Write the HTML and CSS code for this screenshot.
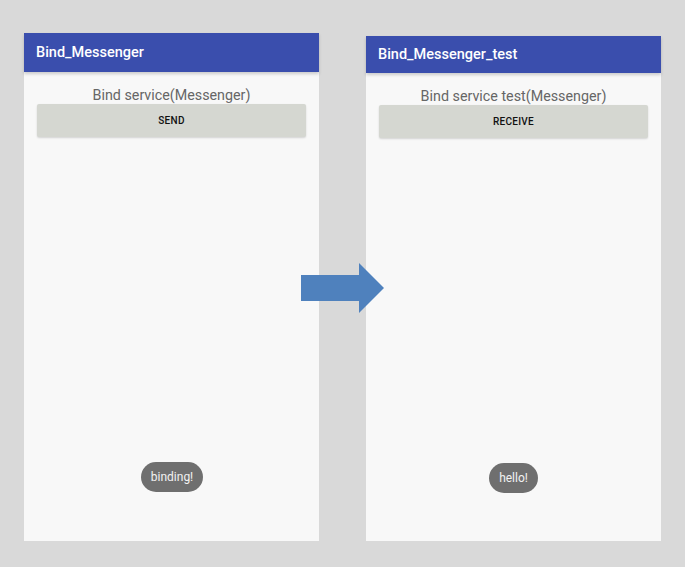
FILE: index.html
```html
<!DOCTYPE html>
<html>
<head>
<meta charset="utf-8">
<link rel="stylesheet" href="styles.css">
</head>
<body>
<div class="stage">
  <div class="phone phone-left">
    <div class="appbar">Bind_Messenger</div>
    <div class="content">
      <div class="label">Bind service(Messenger)</div>
      <div class="btn">SEND</div>
    </div>
    <div class="toast toast-left">binding!</div>
  </div>
  <div class="phone phone-right">
    <div class="appbar">Bind_Messenger_test</div>
    <div class="content">
      <div class="label">Bind service test(Messenger)</div>
      <div class="btn">RECEIVE</div>
    </div>
    <div class="toast toast-right">hello!</div>
  </div>
  <svg class="arrow" width="84" height="52" viewBox="0 0 84 52">
    <polygon points="0,12 58,12 58,0 83,25 58,50 58,38 0,38" fill="#4f81bd"/>
  </svg>
</div>
</body>
</html>
```
FILE: styles.css
```css
html, body {
  margin: 0;
  padding: 0;
  background: #d9d9d9;
  width: 685px;
  height: 567px;
  overflow: hidden;
  font-family: Roboto, "Liberation Sans", sans-serif;
}
.stage {
  position: relative;
  display: flex;
  gap: 47px;
  padding-left: 24px;
  align-items: flex-end;
  height: 541px;
}
.phone {
  position: relative;
  width: 295px;
  background: #f8f8f8;
  display: flex;
  flex-direction: column;
}
.phone-left { height: 508px; }
.phone-right { height: 505px; }
.appbar {
  background: #3a4ead;
  color: #fff;
  font-size: 14.5px;
  font-weight: 500;
  height: 39px;
  line-height: 40px;
  padding-left: 12px;
  box-shadow: 0 2px 3px rgba(0,0,0,0.18);
  position: relative;
  z-index: 1;
}
.phone-right .appbar {
  height: 37px;
  line-height: 37px;
}
.content {
  display: flex;
  flex-direction: column;
  padding: 13px 13px 0;
}
.label {
  text-align: center;
  color: #666;
  font-size: 14.3px;
  line-height: 20px;
  height: 19px;
}
.btn {
  height: 33px;
  background: #d5d7d1;
  border-radius: 2px;
  box-shadow: 0 1px 2px rgba(0,0,0,0.15);
  display: flex;
  align-items: center;
  justify-content: center;
  font-size: 10px;
  font-weight: 500;
  color: #111;
  letter-spacing: 0.3px;
}
.toast {
  position: absolute;
  top: 429px;
  height: 30px;
  line-height: 30px;
  border-radius: 15px;
  background: #6f6f6f;
  color: #f2f2f2;
  font-size: 12px;
  text-align: center;
}
.toast-left { left: 117px; width: 62px; }
.toast-right { left: 123px; width: 49px; top: 427px; }
.arrow {
  position: absolute;
  left: 301px;
  top: 263px;
}
```
